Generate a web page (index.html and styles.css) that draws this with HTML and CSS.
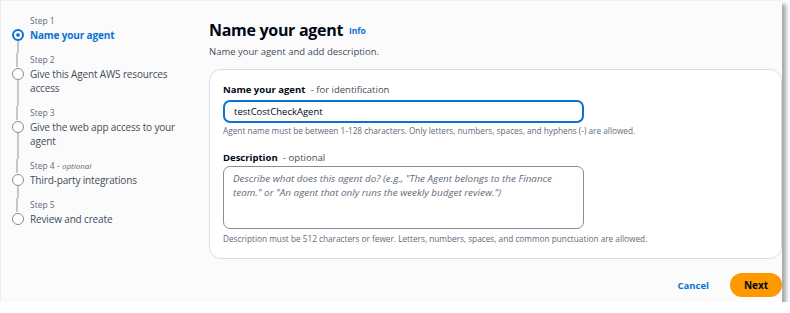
FILE: index.html
```html
<!DOCTYPE html>
<html lang="en">
<head>
    <meta charset="UTF-8">
    <meta name="viewport" content="width=device-width, initial-scale=1.0">
    <title>Create agent</title>
    <link rel="stylesheet" href="styles.css">
</head>
<body>
    <div class="frame">
        <ol class="steps">
            <li class="step active first">
                <span class="rail"></span>
                <span class="step-num">Step 1</span>
                <span class="marker"><span class="dot"></span><span class="line"></span></span>
                <span class="step-title">Name your agent</span>
            </li>
            <li class="step">
                <span class="rail"></span>
                <span class="step-num">Step 2</span>
                <span class="marker"><span class="dot"></span><span class="line"></span></span>
                <span class="step-title">Give this Agent AWS resources access</span>
            </li>
            <li class="step">
                <span class="rail"></span>
                <span class="step-num">Step 3</span>
                <span class="marker"><span class="dot"></span><span class="line"></span></span>
                <span class="step-title">Give the web app access to your agent</span>
            </li>
            <li class="step">
                <span class="rail"></span>
                <span class="step-num">Step 4 - <i>optional</i></span>
                <span class="marker"><span class="dot"></span><span class="line"></span></span>
                <span class="step-title">Third-party integrations</span>
            </li>
            <li class="step last">
                <span class="rail"></span>
                <span class="step-num">Step 5</span>
                <span class="marker"><span class="dot"></span><span class="line"></span></span>
                <span class="step-title">Review and create</span>
            </li>
        </ol>

        <main class="content">
            <h1>Name your agent <a class="info" href="#">Info</a></h1>
            <p class="subtitle">Name your agent and add description.</p>

            <section class="card">
                <label class="field-label">Name your agent <span class="hint">- for identification</span></label>
                <div class="input">testCostCheckAgent</div>
                <p class="help">Agent name must be between 1-128 characters. Only letters, numbers, spaces, and hyphens (-) are allowed.</p>

                <label class="field-label desc-label">Description <span class="hint">- optional</span></label>
                <div class="textarea">Describe what does this agent do? (e.g., "The Agent belongs to the Finance team." or "An agent that only runs the weekly budget review.")</div>
                <p class="help help-last">Description must be 512 characters or fewer. Letters, numbers, spaces, and common punctuation are allowed.</p>
            </section>

            <div class="actions">
                <a class="cancel" href="#">Cancel</a>
                <button class="next">Next</button>
            </div>
        </main>
    </div>
</body>
</html>
```

FILE: styles.css
```css
body { margin: 0; background: #fff; font-family: 'Open Sans', sans-serif; color: #000716; }
.frame { width: 782px; height: 302px; background: #fbfbfb; border-left: 1px solid #ececec; border-top: 1px solid #f0f0f0; box-sizing: border-box; box-shadow: 4px 4px 4px rgba(0, 0, 0, 0.35); display: flex; overflow: hidden; }

.steps { list-style: none; margin: 0; padding: 13px 30px 0 4px; width: 208px; box-sizing: border-box; flex: none; }
.step { display: grid; grid-template-columns: 25px 1fr; color: #5f6b7a; }
.rail { width: 2px; background: #c6c6cd; margin-left: 11px; }
.first .rail { background: none; }
.step-num { font-size: 8.5px; line-height: 14px; }
.step-num i { font-size: 8px; }
.marker { display: flex; flex-direction: column; align-items: center; padding-top: 1px; }
.dot { width: 12px; height: 12px; border: 1.5px solid #8c8c94; border-radius: 50%; box-sizing: border-box; background: #fff; }
.line { flex: 1; width: 2px; background: #c6c6cd; }
.last .line { background: none; }
.step-title { font-size: 10px; letter-spacing: -0.15px; line-height: 14px; padding-bottom: 11px; color: #414d5c; }
.active .step-title { color: #0972d3; font-weight: 700; }
.active .dot { border: 2px solid #0972d3; padding: 2px; background: #0972d3 content-box; box-shadow: inset 0 0 0 2px #fff; }

.content { flex: 1; padding-top: 17px; }
h1 { margin: 0; font-size: 16px; letter-spacing: -0.3px; line-height: 24px; font-weight: 700; color: #000716; }
.info { font-size: 8.5px; letter-spacing: 0; color: #0972d3; text-decoration: none; font-weight: 700; vertical-align: 2px; margin-left: 2px; }
.subtitle { margin: 2px 0 0; font-size: 9.5px; line-height: 14px; color: #414d5c; }

.card { margin-top: 10px; background: #fff; border: 1px solid #dcdde0; border-radius: 12px; padding: 13px 14px 12px 13px; }
.field-label { display: block; font-size: 9.5px; line-height: 14px; font-weight: 700; }
.hint { font-weight: 400; color: #414d5c; margin-left: 3px; }
.input { margin-top: 3px; width: 361px; height: 23px; box-sizing: border-box; border: 2px solid #0972d3; border-radius: 7px; font-size: 9.5px; line-height: 19px; padding-left: 9px; }
.help { margin: 1px 0 0; font-size: 8.25px; line-height: 14px; color: #5f6b7a; }
.desc-label { margin-top: 13px; }
.textarea { margin-top: 1px; width: 361px; height: 63px; box-sizing: border-box; border: 1px solid #8c8c94; border-radius: 7px; font-size: 9.85px; line-height: 14px; padding: 4px 9px; font-style: italic; color: #5f6b7a; }
.help-last { margin-top: 3px; }

.actions { display: flex; justify-content: flex-end; align-items: center; gap: 21px; margin-top: 14px; }
.cancel { font-size: 9.5px; font-weight: 700; color: #0972d3; text-decoration: none; }
.next { font-family: inherit; font-size: 10px; font-weight: 700; color: #000716; background: #ff9900; border: none; border-radius: 12px; width: 52px; height: 24px; padding: 0; }
```
